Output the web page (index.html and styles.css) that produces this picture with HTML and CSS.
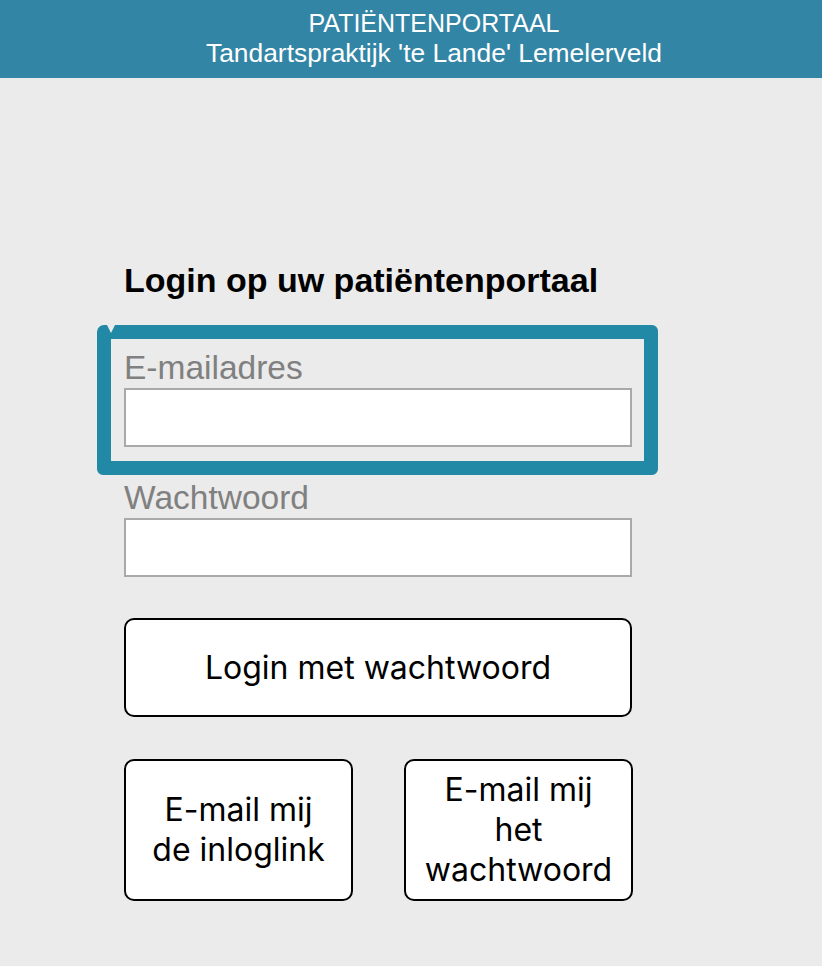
FILE: index.html
```html
<!DOCTYPE html>
<html lang="nl">
<head>
<meta charset="utf-8">
<title>Patiëntenportaal</title>
<link rel="stylesheet" href="styles.css">
</head>
<body>
<header class="top">
  <div class="top-line">PATIËNTENPORTAAL</div>
  <div class="top-line top-name">Tandartspraktijk 'te Lande' Lemelerveld</div>
</header>
<main class="login">
  <h2 class="login-title">Login op uw patiëntenportaal</h2>
  <div class="field field-focus">
    <label class="field-label" for="email">E-mailadres</label>
    <input class="field-input" id="email" type="email">
  </div>
  <div class="field">
    <label class="field-label" for="pw">Wachtwoord</label>
    <input class="field-input" id="pw" type="password">
  </div>
  <button class="btn btn-wide" type="button">Login met wachtwoord</button>
  <div class="btn-row">
    <button class="btn btn-half" type="button">E-mail mij<br>de inloglink</button>
    <button class="btn btn-half" type="button">E-mail mij<br>het<br>wachtwoord</button>
  </div>
</main>
</body>
</html>
```
FILE: styles.css
```css
html, body {
  margin: 0;
  padding: 0;
  background: #ebebeb;
  font-family: "Liberation Sans", Arial, sans-serif;
}

.top {
  background: #3385a5;
  color: #ffffff;
  height: 78px;
  box-sizing: border-box;
  padding: 8px 0 0 46px;
  text-align: center;
  font-size: 25px;
  line-height: 30px;
}

.top-name {
  font-size: 26.4px;
}

.login {
  width: 508px;
  margin-left: 124px;
  padding-top: 182px;
}

.login-title {
  margin: 0;
  font-size: 34px;
  line-height: 40px;
  font-weight: bold;
  color: #000;
}

.field {
  display: flex;
  flex-direction: column;
}

.field-focus {
  position: relative;
  margin: 25px -26px 0 -27px;
  padding: 9px 12px 14px 13px;
  border: 14px solid #2188a6;
  border-radius: 7px 6px 6px 6px;
}

.field-focus::before {
  content: "";
  position: absolute;
  top: -14px;
  left: -4px;
  width: 8px;
  height: 8px;
  background: #ebebeb;
  clip-path: polygon(0 0, 100% 0, 50% 100%);
}

.field-label {
  display: block;
  font-size: 33.5px;
  line-height: 40px;
  color: #808080;
}

.field + .field {
  margin-top: 3px;
}

.field-input {
  box-sizing: border-box;
  width: 508px;
  height: 59px;
  margin: 0;
  border: 2px solid #a9a9a9;
  background: #ffffff;
  outline: none;
}

.btn {
  box-sizing: border-box;
  background: #ffffff;
  border: 2px solid #000;
  border-radius: 10px;
  font-family: Inter, "Liberation Sans", sans-serif;
  font-size: 32px;
  line-height: 40px;
  color: #000;
  padding: 0;
  text-align: center;
}

.btn-wide {
  display: block;
  width: 508px;
  height: 99px;
  margin-top: 41px;
}

.btn-row {
  display: flex;
  justify-content: space-between;
  width: 509px;
  margin-top: 42px;
}

.btn-half {
  width: 229px;
  height: 142px;
}
```
